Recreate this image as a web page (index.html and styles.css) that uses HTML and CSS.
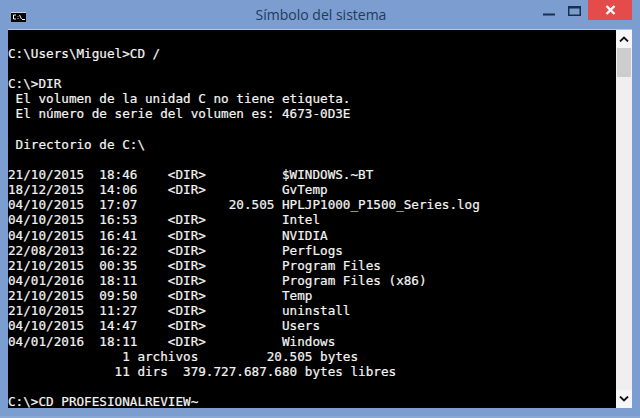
FILE: index.html
```html
<!DOCTYPE html>
<html lang="es">
<head>
<meta charset="utf-8">
<title>Símbolo del sistema</title>
<link rel="stylesheet" href="styles.css">
</head>
<body>
<div class="window">
  <header class="titlebar">
    <svg class="app-icon" width="15" height="10" viewBox="0 0 15 10">
      <rect width="15" height="10" fill="#050505"/>
      <rect x="0" y="0" width="15" height="1" fill="#c8d0dc"/>
      <path d="M5 3H2.5V7H5M7 4V4.6M7 6.2V7M8.5 3L10.5 7M11 7.5H14" fill="none" stroke="#f2f2f2" stroke-width="1"/>
    </svg>
    <div class="title">Símbolo del sistema</div>
    <div class="controls">
      <svg class="min" width="12" height="3" viewBox="0 0 12 3"><rect width="12" height="2" y="0.5" fill="#17304f"/></svg>
      <svg class="max" width="13" height="10" viewBox="0 0 13 10"><rect x="0.75" y="0.75" width="11.5" height="8.5" fill="none" stroke="#17304f" stroke-width="1.5"/><rect x="1" y="1" width="11" height="1.5" fill="#17304f"/></svg>
      <div class="close">
        <svg width="11" height="10" viewBox="0 0 11 10"><path d="M1.5 1L9.5 9M9.5 1L1.5 9" stroke="#fff" stroke-width="2.4" fill="none"/></svg>
      </div>
    </div>
  </header>
  <main class="client">
<pre class="console">

C:\Users\Miguel&gt;CD /

C:\&gt;DIR
 El volumen de la unidad C no tiene etiqueta.
 El número de serie del volumen es: 4673-0D3E

 Directorio de C:\

21/10/2015  18:46    &lt;DIR&gt;          $WINDOWS.~BT
18/12/2015  14:06    &lt;DIR&gt;          GvTemp
04/10/2015  17:07            20.505 HPLJP1000_P1500_Series.log
04/10/2015  16:53    &lt;DIR&gt;          Intel
04/10/2015  16:41    &lt;DIR&gt;          NVIDIA
22/08/2013  16:22    &lt;DIR&gt;          PerfLogs
21/10/2015  00:35    &lt;DIR&gt;          Program Files
04/01/2016  18:11    &lt;DIR&gt;          Program Files (x86)
21/10/2015  09:50    &lt;DIR&gt;          Temp
21/10/2015  11:27    &lt;DIR&gt;          uninstall
04/10/2015  14:47    &lt;DIR&gt;          Users
04/01/2016  18:11    &lt;DIR&gt;          Windows
               1 archivos         20.505 bytes
              11 dirs  379.727.687.680 bytes libres

C:\&gt;CD PROFESIONALREVIEW~
</pre>
    <aside class="scrollbar">
      <div class="arrow">
        <svg width="10" height="6" viewBox="0 0 10 6"><path d="M1 5.5L5 1.5L9 5.5" fill="none" stroke="#111" stroke-width="1.8"/></svg>
      </div>
      <div class="thumb"></div>
      <div class="track"></div>
      <div class="arrow">
        <svg width="10" height="6" viewBox="0 0 10 6"><path d="M1 .5L5 4.5L9 .5" fill="none" stroke="#111" stroke-width="1.8"/></svg>
      </div>
    </aside>
  </main>
</div>
</body>
</html>
```
FILE: styles.css
```css
* { box-sizing: border-box; }
html, body { margin: 0; padding: 0; }
body { width: 640px; height: 418px; overflow: hidden; background: #7c9dcf; }
.window {
  width: 640px;
  height: 418px;
  display: flex;
  flex-direction: column;
  padding: 0 8px 8px;
  background: #7c9dcf;
  border-bottom: 2px solid #8aa8d4;
}
.titlebar {
  height: 30px;
  flex: none;
  display: flex;
  align-items: flex-start;
  border-bottom: 1px solid #b4c8e6;
}
.app-icon { margin: 12px 0 0 3px; flex: none; }
.title {
  flex: 1;
  margin-top: 4px;
  padding-left: 73px;
  text-align: center;
  font: 14px/22px "Open Sans", "Noto Sans", sans-serif;
  color: #1f3a5e;
}
.controls { display: flex; align-items: flex-start; flex: none; }
.min { margin-top: 13px; }
.max { margin: 6px 7px 0 13px; }
.close {
  width: 44px;
  height: 20px;
  background: #e44b4b;
  display: flex;
  align-items: center;
  justify-content: center;
}
.client { flex: 1; min-height: 0; display: flex; }
.console {
  flex: 1;
  margin: 0;
  padding: 0.5px 0 0 0;
  background: #000;
  color: #f4f4f4;
  font-family: "DejaVu Sans Mono", "Liberation Mono", monospace;
  font-size: 12.65px;
  line-height: 15.15px;
  -webkit-text-stroke: 0.2px #f4f4f4;
  overflow: hidden;
  white-space: pre;
}
.scrollbar {
  width: 16px;
  flex: none;
  display: flex;
  flex-direction: column;
  background: #f0f0f0;
}
.arrow {
  height: 18px;
  flex: none;
  display: flex;
  align-items: center;
  justify-content: center;
  background: #f6f6f6;
}
.thumb { height: 29px; flex: none; margin: 0 1px; background: #cdcdcd; }
.track { flex: 1; background: #f0eeee; }
```
